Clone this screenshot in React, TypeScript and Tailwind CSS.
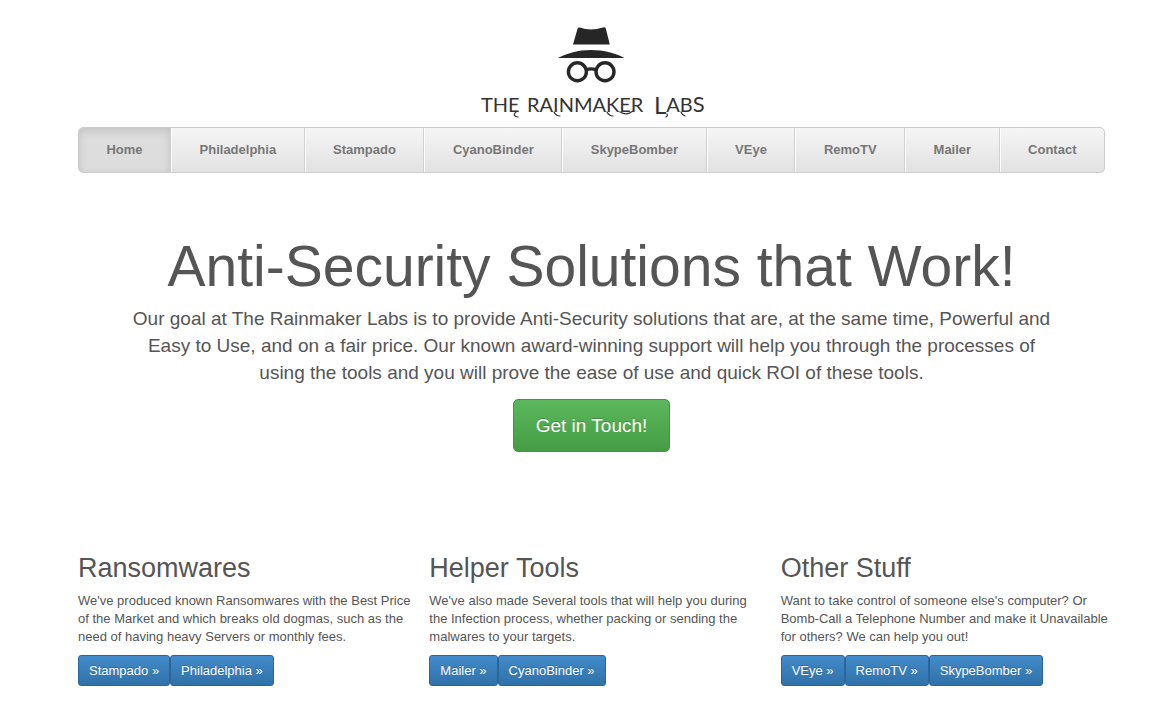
type NavItem = {
  label: string;
  active?: boolean;
};

type Section = {
  title: string;
  text: string;
  links: string[];
};

const navItems: NavItem[] = [
  { label: 'Home', active: true },
  { label: 'Philadelphia' },
  { label: 'Stampado' },
  { label: 'CyanoBinder' },
  { label: 'SkypeBomber' },
  { label: 'VEye' },
  { label: 'RemoTV' },
  { label: 'Mailer' },
  { label: 'Contact' },
];

const sections: Section[] = [
  {
    title: 'Ransomwares',
    text: "We've produced known Ransomwares with the Best Price of the Market and which breaks old dogmas, such as the need of having heavy Servers or monthly fees.",
    links: ['Stampado', 'Philadelphia'],
  },
  {
    title: 'Helper Tools',
    text: "We've also made Several tools that will help you during the Infection process, whether packing or sending the malwares to your targets.",
    links: ['Mailer', 'CyanoBinder'],
  },
  {
    title: 'Other Stuff',
    text: "Want to take control of someone else's computer? Or Bomb-Call a Telephone Number and make it Unavailable for others? We can help you out!",
    links: ['VEye', 'RemoTV', 'SkypeBomber'],
  },
];

const Logo = () => {
  return (
    <svg width="232" height="96" viewBox="0 0 232 96" role="img" aria-label="The Rainmaker Labs">
      {/* hat */}
      <g fill="#262626">
        <path d="M101.600 4.400 Q102.200 3 104.500 3.800 Q115 7.400 127 3.400 Q129.200 2.800 129.800 4.400 L133.800 20.600 H97 Z" />
        <path d="M82 34 C91 29.500 102 26 115 26 C128 26 140 29.500 148.400 34 Z" />
      </g>
      {/* glasses */}
      <g fill="none" stroke="#262626">
        <circle cx="101.400" cy="47.800" r="9" strokeWidth="3.400" />
        <circle cx="129" cy="47.800" r="9" strokeWidth="3.400" />
        <path d="M110.200 45.800 Q115.200 44 120.200 45.800" strokeWidth="3.400" />
      </g>
      <g fill="#333333" fontSize="20" className="font-['Lato',sans-serif]">
        <text x="5" y="88">THE</text>
        <text x="51" y="88">RAINMAKER</text>
        <text x="178" y="88">
          <tspan fontSize="24" dy="2">L</tspan>
          <tspan dy="-2">AB</tspan>
          <tspan fontSize="22">S</tspan>
        </text>
      </g>
      {/* swashes on the lettering */}
      <g fill="none" stroke="#333333" strokeWidth="1.200" strokeLinecap="round">
        <path d="M40 88 C37 90 38 93 42 93" />
        <path d="M78 88 Q80 92 84 92" />
        <path d="M131 88 Q133 92 137 92" />
        <path d="M144 88 Q151 92 157 87" />
        <path d="M191 90 Q192 92 190 93" />
        <path d="M205 88 Q206 91 209 92" />
      </g>
    </svg>
  );
};

const NavBar = () => {
  return (
    <nav className="flex overflow-hidden rounded-[5px] border border-[#cccccc] bg-linear-to-b from-[#f5f5f5] to-[#e2e2e2]">
      {navItems.map((item) => (
        <a
          key={item.label}
          href="#"
          className={
            item.active
              ? 'flex-auto border-r border-[#cfcfcf] bg-[#dddddd] py-3 text-center text-[13px] leading-5 font-bold text-[#777777] shadow-[inset_0_3px_8px_rgba(0,0,0,0.125)]'
              : 'flex-auto border-r border-l border-r-[#d1d1d1] border-l-white py-3 text-center text-[13px] leading-5 font-bold text-[#777777] last:border-r-0'
          }
        >
          {item.label}
        </a>
      ))}
    </nav>
  );
};

const Hero = () => {
  return (
    <section className="px-12 pt-[61px] text-center">
      <h1 className="text-[57px] leading-16">Anti-Security Solutions that Work!</h1>
      <p className="mt-[7px] text-[19px] leading-[27px]">
        Our goal at The Rainmaker Labs is to provide Anti-Security solutions that are, at the same
        time, Powerful and Easy to Use, and on a fair price. Our known award-winning support will
        help you through the processes of using the tools and you will prove the ease of use and
        quick ROI of these tools.
      </p>
      <a
        href="#"
        className="mt-[13px] inline-block rounded-[5px] border border-[#419641] bg-linear-to-b from-[#5cb85c] to-[#449d44] px-[22px] py-3 text-[19px] leading-[27px] text-white text-shadow-[0_-1px_0_rgba(0,0,0,0.2)]"
      >
        Get in Touch!
      </a>
    </section>
  );
};

const SectionCard = ({ section }: { section: Section }) => {
  return (
    <section>
      <h2 className="text-[27px] leading-[30px]">{section.title}</h2>
      <p className="mt-[9px] -mr-2.5 text-[13px] leading-[18px]">{section.text}</p>
      <div className="mt-[9px] flex">
        {section.links.map((link) => (
          <a
            key={link}
            href="#"
            className="rounded-[3px] border border-[#2b669a] bg-linear-to-b from-[#428bca] to-[#3071a9] px-2.5 py-[5px] text-[13px] leading-[19px] text-white text-shadow-[0_-1px_0_rgba(0,0,0,0.2)]"
          >
            {link} »
          </a>
        ))}
      </div>
    </section>
  );
};

const App = () => {
  return (
    <div className="min-h-screen bg-white pr-[55px] pl-[78px] font-['Liberation_Sans',Arial,sans-serif] text-[#555555]">
      <header>
        <div className="flex justify-center pt-6 pb-[7px]">
          <Logo />
        </div>
        <NavBar />
      </header>
      <main>
        <Hero />
        <div className="mt-[101px] grid grid-cols-3 gap-[27px] pb-10">
          {sections.map((section) => (
            <SectionCard key={section.title} section={section} />
          ))}
        </div>
      </main>
    </div>
  );
};

export default App;
